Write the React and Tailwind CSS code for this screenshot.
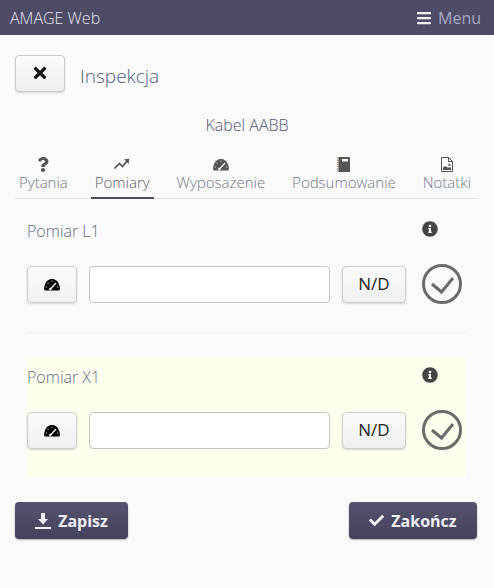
import { FaBars, FaCheck, FaInfoCircle, FaQuestion, FaTimes } from "react-icons/fa";

function GaugeIcon({ className }) {
    return (
        <svg viewBox="0 0 16 13" className={className} fill="currentColor">
            <path d="M0.5 12.5 C0 10.5 0 9.5 0.5 8 C1.5 3.5 4.5 1 8 1 C11.5 1 14.5 3.5 15.5 8 C16 9.5 16 10.5 15.5 12.5 Z" />
            <path d="M6.5 11 L12 5" stroke="#fafafa" strokeWidth="1.2" />
            <circle cx="6.3" cy="11" r="1.2" fill="#fafafa" />
            <circle cx="8" cy="3" r="0.6" fill="#fafafa" />
            <circle cx="4" cy="5" r="0.6" fill="#fafafa" />
            <circle cx="2.4" cy="9" r="0.6" fill="#fafafa" />
            <circle cx="13.6" cy="9" r="0.6" fill="#fafafa" />
        </svg>
    );
}

function TrendIcon({ className }) {
    return (
        <svg viewBox="0 0 16 12" className={className} fill="none" stroke="currentColor" strokeWidth="1.7">
            <path d="M0.5 10.5 L5.5 5.5 L8.5 8.5 L13 3" />
            <path d="M10.5 1.5 L15 1 L14.5 5.5 Z" fill="currentColor" strokeWidth="0.5" />
        </svg>
    );
}

function NotebookIcon({ className }) {
    return (
        <svg viewBox="0 0 13 15" className={className} fill="currentColor">
            <rect x="1.5" y="0" width="11.5" height="15" />
            <rect x="5" y="2" width="6" height="2.5" fill="#fafafa" />
            <path d="M0 1.5 H2 M0 3.5 H2 M0 5.5 H2 M0 7.5 H2 M0 9.5 H2 M0 11.5 H2 M0 13.5 H2" stroke="#b08a60" strokeWidth="1" />
        </svg>
    );
}

function PictureFileIcon({ className }) {
    return (
        <svg viewBox="0 0 12 15" className={className}>
            <path d="M0.5 0.5 H7.5 L11.5 4.5 V14.5 H0.5 Z" fill="none" stroke="currentColor" />
            <path d="M7.5 0.5 V4.5 H11.5" fill="none" stroke="currentColor" />
            <path d="M2 13 V10.5 L4.5 9 L6.5 10.5 L10 10.5 V13 Z" fill="currentColor" />
            <circle cx="8.3" cy="7.8" r="1.1" fill="currentColor" />
        </svg>
    );
}

function SaveIcon({ className }) {
    return (
        <svg viewBox="0 0 16 16" className={className} fill="currentColor">
            <path d="M6 0 H10 V6 H13 L8 11.5 L3 6 H6 Z" />
            <rect x="0" y="14" width="16" height="2" />
        </svg>
    );
}

function CircleCheck() {
    return (
        <svg viewBox="0 0 40 40" className="w-10 h-10 shrink-0 text-[#6b6b6b]" fill="none" stroke="currentColor">
            <circle cx="20" cy="20" r="18.5" strokeWidth="3" />
            <path d="M10 20 L19.5 28 L31 14" strokeWidth="3" />
        </svg>
    );
}

const tabs = [
    { label: "Pytania", icon: <FaQuestion className="w-[14px] h-[15px]" /> },
    { label: "Pomiary", icon: <TrendIcon className="w-[16px] h-[12px]" />, active: true },
    { label: "Wyposażenie", icon: <GaugeIcon className="w-[16px] h-[13px]" /> },
    { label: "Podsumowanie", icon: <NotebookIcon className="w-[13px] h-[15px]" /> },
    { label: "Notatki", icon: <PictureFileIcon className="w-[12px] h-[15px]" /> },
];

const greyBtn =
    "h-[37px] rounded border border-[#cccccc] bg-gradient-to-b from-[#fafafa] to-[#f0f0f0] shadow-[0_1px_2px_rgba(0,0,0,0.15)] flex items-center justify-center shrink-0";

function Measurement({ label, highlight }) {
    return (
        <div className={highlight ? "bg-[#ffffee] h-[120px] pt-[10px]" : "h-[116px] pt-[4px]"}>
            <div className="flex justify-between pr-[4px] h-[21px]">
                <div className="text-[16px] leading-[21px] font-light text-[#5f6b8a]">{label}</div>
                <div className="w-10 h-[16px] flex items-center">
                    <FaInfoCircle className="w-[16px] h-[16px] text-[#444444]" />
                </div>
            </div>
            <div className="flex items-center pr-[4px] mt-[22px]">
                <button className={`${greyBtn} w-[50px] text-[#050505]`}>
                    <GaugeIcon className="w-[16px] h-[13px]" />
                </button>
                <input className="ml-[12px] w-[241px] h-[37px] rounded border border-[#c4c4c4] bg-white" />
                <button className={`${greyBtn} ml-[12px] w-[64px] text-[17px] text-[#222222]`}>N/D</button>
                <div className="ml-[16px]">
                    <CircleCheck />
                </div>
            </div>
        </div>
    );
}

export default function App() {
    return (
        <div className="min-h-[588px] bg-[#fafafa] font-['Open_Sans',sans-serif]">
            {/* Top bar */}
            <div className="h-[35px] bg-[#4d4b66] flex items-center justify-between pl-[10px] pr-[13px]">
                <span className="text-[16px] font-light text-[#e6e6ee]">AMAGE Web</span>
                <span className="flex items-center gap-[6px] text-[16px] text-[#a9a9c2]">
                    <FaBars className="w-[16px] h-[16px] text-[#f0f0f6]" />
                    Menu
                </span>
            </div>

            <div className="px-[15px]">
                <div className="pt-[20px] flex items-center gap-[15px]">
                    <button className={`${greyBtn} w-[50px] pb-[2px] text-[#111111]`}>
                        <FaTimes className="w-[18px] h-[18px]" />
                    </button>
                    <h1 className="text-[19px] font-light text-[#4f5f88] pt-[5px]">Inspekcja</h1>
                </div>

                <div className="mt-[23px] text-center text-[16px] font-light leading-[21px] text-[#4f5678]">Kabel AABB</div>

                {/* Tabs */}
                <div className="mt-[19px] w-[463px] pr-[3px] flex justify-between border-b border-[#e2e2e2] h-[44px]">
                    {tabs.map((t) => (
                        <div
                            key={t.label}
                            className={`px-1 flex flex-col items-center h-[44px] ${t.active ? "border-b-2 border-[#4d4b66]" : ""}`}
                        >
                            <div className="h-[18px] flex items-center text-[#555555]">{t.icon}</div>
                            <div className={`text-[15px] font-light leading-[19px] ${t.active ? "text-[#5e5875]" : "text-[#70788c]"}`}>
                                {t.label}
                            </div>
                        </div>
                    ))}
                </div>

                <div className="w-[463px] px-[12px] mt-[18px]">
                    <Measurement label="Pomiar L1" />
                    <div className="border-t border-[#eeeeee] mt-[-1px] mb-[24px]" />
                    <Measurement label="Pomiar X1" highlight />
                </div>

                <div className="mt-[25px] flex justify-between pr-[2px]">
                    <button className="h-[37px] w-[113px] rounded bg-gradient-to-b from-[#54526e] to-[#44425b] shadow-[0_1px_2px_rgba(0,0,0,0.3)] flex items-center justify-center gap-[7px] text-[16px] font-bold text-[#f0f0f6]">
                        <SaveIcon className="w-[16px] h-[16px]" />
                        Zapisz
                    </button>
                    <button className="h-[37px] w-[128px] rounded bg-gradient-to-b from-[#54526e] to-[#44425b] shadow-[0_1px_2px_rgba(0,0,0,0.3)] flex items-center justify-center gap-[7px] text-[16px] font-bold text-[#f0f0f6]">
                        <FaCheck className="w-[15px] h-[15px]" />
                        Zakończ
                    </button>
                </div>
            </div>
        </div>
    );
}
